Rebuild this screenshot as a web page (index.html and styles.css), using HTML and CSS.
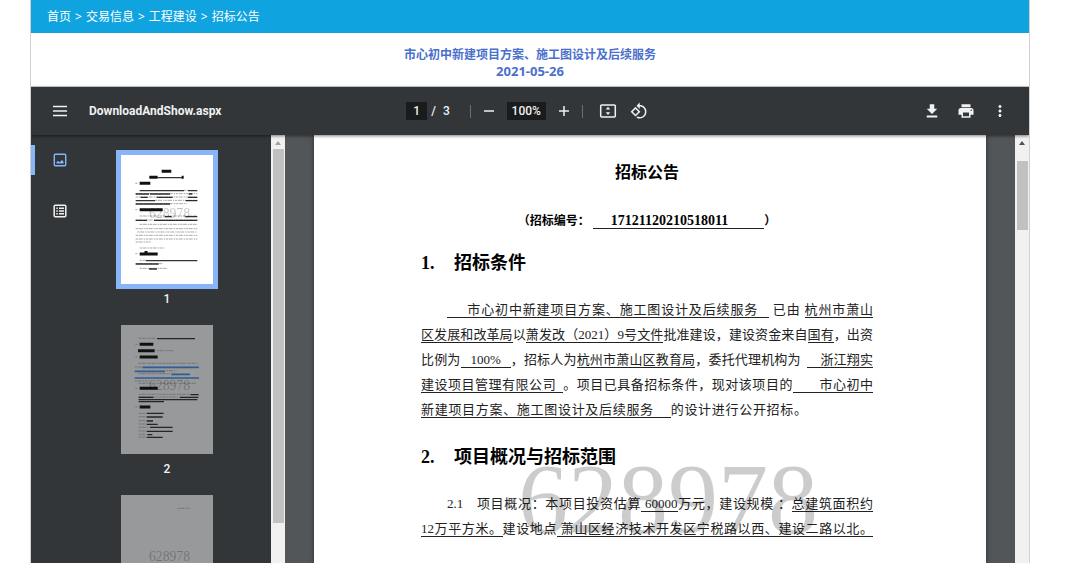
FILE: index.html
```html
<!DOCTYPE html>
<html lang="zh-CN">
<head>
<meta charset="utf-8">
<meta name="viewport" content="width=device-width, initial-scale=1">
<title>招标公告</title>
<link rel="stylesheet" href="styles.css">
</head>
<body>
<div class="shell">
  <nav class="crumbs" aria-label="面包屑">
    <a href="#">首页</a><span>&gt;</span><a href="#">交易信息</a><span>&gt;</span><a href="#">工程建设</a><span>&gt;</span><a href="#">招标公告</a>
  </nav>
  <header class="notice">
    <h1 class="notice-title">市心初中新建项目方案、施工图设计及后续服务</h1>
    <time class="notice-date" datetime="2021-05-26">2021-05-26</time>
  </header>
  <section class="viewer">
    <div class="toolbar">
      <div class="tools-left">
        <button class="tool" type="button" aria-label="菜单">
          <svg width="24" height="24" viewBox="0 0 24 24"><path d="M5 7.500h14M5 12h14M5 16.500h14" stroke="currentColor" stroke-width="1.700"/></svg>
        </button>
        <span class="file-name">DownloadAndShow.aspx</span>
      </div>
      <div class="tools-mid">
        <input class="field page-field" type="text" value="1" aria-label="页码">
        <span class="page-total"><span>/</span><span>3</span></span>
        <span class="divider"></span>
        <button class="tool small" type="button" aria-label="缩小">
          <svg width="14" height="14" viewBox="0 0 14 14"><path d="M2 7h10" stroke="currentColor" stroke-width="1.5"/></svg>
        </button>
        <input class="field zoom-field" type="text" value="100%" aria-label="缩放">
        <button class="tool small" type="button" aria-label="放大">
          <svg width="14" height="14" viewBox="0 0 14 14"><path d="M2 7h10M7 2v10" stroke="currentColor" stroke-width="1.5"/></svg>
        </button>
        <span class="divider"></span>
        <button class="tool fit" type="button" aria-label="适合页面">
          <svg width="18" height="18" viewBox="0 0 18 18"><rect x="1.7" y="2.9" width="14.6" height="12" rx="1" fill="none" stroke="currentColor" stroke-width="1.5"/><path d="M9 4.8l2.2 2.7H6.800zM9 13l2.200-2.700H6.800z" fill="currentColor"/></svg>
        </button>
        <button class="tool rotate" type="button" aria-label="旋转">
          <svg width="18" height="18" viewBox="0 0 24 24"><path fill="currentColor" d="M7.340 6.410L.860 12.900l6.490 6.480 6.490-6.480-6.500-6.490zM3.690 12.900l3.660-3.660L11 12.900l-3.660 3.660-3.650-3.660zm15.670-6.260C17.610 4.880 15.300 4 13 4V.760L8.760 5 13 9.240V6c1.790 0 3.580.680 4.950 2.050 2.730 2.730 2.730 7.170 0 9.900C16.580 19.320 14.790 20 13 20c-.970 0-1.940-.210-2.840-.610l-1.490 1.490C10.020 21.620 11.510 22 13 22c2.300 0 4.610-.880 6.360-2.640 3.520-3.510 3.520-9.210 0-12.720z"/></svg>
        </button>
      </div>
      <div class="tools-right">
        <button class="tool" type="button" aria-label="下载">
          <svg width="18" height="18" viewBox="0 0 24 24"><path fill="currentColor" d="M19 9h-4V3H9v6H5l7 7 7-7zM5 18v2.500h14V18z"/></svg>
        </button>
        <button class="tool" type="button" aria-label="打印">
          <svg width="18" height="18" viewBox="0 0 24 24"><path fill="currentColor" d="M19 8H5c-1.660 0-3 1.340-3 3v6h4v4h12v-4h4v-6c0-1.660-1.340-3-3-3zm-3 11H8v-5h8v5zm3-7c-.550 0-1-.450-1-1s.450-1 1-1 1 .450 1 1-.450 1-1 1zm-1-9H6v4h12V3z"/></svg>
        </button>
        <button class="tool" type="button" aria-label="更多">
          <svg width="18" height="18" viewBox="0 0 24 24"><path fill="currentColor" d="M12 8c1.100 0 2-.900 2-2s-.900-2-2-2-2 .900-2 2 .900 2 2 2zm0 2c-1.100 0-2 .900-2 2s.900 2 2 2 2-.900 2-2-.900-2-2-2zm0 6c-1.100 0-2 .900-2 2s.900 2 2 2 2-.900 2-2-.900-2-2-2z"/></svg>
        </button>
      </div>
    </div>
    <div class="stage">
      <aside class="sidebar">
        <div class="rail">
          <button class="rail-item active" type="button" aria-label="缩略图">
            <svg width="14" height="14" viewBox="0 0 14 14"><rect x="1.300" y="1.300" width="11.400" height="11.400" rx="1" fill="none" stroke="currentColor" stroke-width="1.400"/><path d="M3.500 10.500V9l1.500-1 1.700 1.300L9 7l1.500 1.500v2z" fill="currentColor"/></svg>
          </button>
          <button class="rail-item" type="button" aria-label="大纲">
            <svg width="14" height="14" viewBox="0 0 14 14"><rect x="1.200" y="1.200" width="11.600" height="11.600" rx="1" fill="none" stroke="currentColor" stroke-width="1.500"/><path d="M3.300 4.200h1.500M6 4.200h5M3.300 7h1.500M6 7h5M3.300 9.800h1.500M6 9.800h5" stroke="currentColor" stroke-width="1.600"/></svg>
          </button>
        </div>
        <div class="thumbs">
          <figure class="thumb current">
            <svg class="sheet" viewBox="273 75 276 387" aria-hidden="true">
              <g class="faint"><path d="M462 181h12M317 191h185M317 201h185M375 211h127M317 221h153M329 258h173M317 270h185M329 283h173M317 296h185M322 306h180M317 316h185M317 327h185M317 336h45M329 354h73M329 391h20M317 401h80M329 415h81M316 160h6M316 239h6M316 371h6"/></g>
              <g class="rule"><path d="M383 143h75M329 182h133M474 182h28M317 192h40M360 192h60M476 192h11M332 202h21M380 202h48M474 202h28M317 212h58M467 212h35M317 222h103M405 260h20M466 260h36M317 271h34M372 271h130M348 392h154M317 402h69M357 417h24"/></g>
              <g class="bold"><path d="M395 124h29M358 142h25M455 142h6M329 160h32M329 239h69M329 372h54M348 368v-5"/></g>
              <text class="mark" x="357" y="265">628978</text>
            </svg>
            <figcaption>1</figcaption>
          </figure>
          <figure class="thumb">
            <svg class="sheet" viewBox="273 45 276 387" aria-hidden="true">
              <g class="faint"><path d="M326 85h50M380 122h50M326 160h180M314 171h23M408 182h32M326 191h94M314 213h44M326 220h174M326 253h156M326 261h120M326 310h20M326 320h20M326 332h20M326 342h20M326 352h30M326 363h20M326 373h20M326 381h20M316 103h6M316 141h6M316 235h6M316 291h6"/></g>
              <g class="rule"><path d="M381 86h114M482 254h24M326 262h44M449 262h56M326 269h176M326 275h76M350 310h51M350 321h48M350 333h19M350 343h33M360 352h68M350 364h78M352 374h15M350 382h48"/></g>
              <g class="blue"><path d="M337 172h170M314 184h91M424 193h56M314 204h193"/></g>
              <g class="bold"><path d="M329 103h41M324 122h50M329 141h54M329 235h54M329 291h32"/></g>
              <text class="mark" x="357" y="240">628978</text>
            </svg>
            <figcaption>2</figcaption>
          </figure>
          <figure class="thumb">
            <svg class="sheet" viewBox="273 555 276 387" aria-hidden="true">
              <g class="faint"><path d="M442 595h38"/></g>
              <text class="mark" x="357" y="752">628978</text>
            </svg>
          </figure>
        </div>
        <div class="scroll"><span class="arrow dim"></span><span class="grip long"></span></div>
      </aside>
      <main class="canvas">
        <article class="page">
          <h2 class="doc-title">招标公告</h2>
          <p class="doc-id">（招标编号：&nbsp;<u>&emsp;&ensp;<span class="doc-number">17121120210518011</span>&emsp;&emsp;&emsp;</u>）</p>
          <h3 class="doc-head"><span class="num">1.</span>招标条件</h3>
          <div class="para">
            <p class="line indent"><u>&ensp;&emsp;市心初中新建项目方案、施工图设计及后续服务&ensp;&nbsp;</u>&nbsp;已由&nbsp;<u>杭州市萧山</u></p>
            <p class="line"><u>区发展和改革局</u>以<u>萧发改（2021）9号文件</u>批准建设，建设资金来自<u>国有</u>，出资</p>
            <p class="line">比例为<u>&ensp;&nbsp;100%&ensp;&nbsp;</u>，招标人为<u>杭州市萧山区教育局</u>，委托代理机构为&ensp;<u>&emsp;浙江翔实</u></p>
            <p class="line"><u>建设项目管理有限公司&ensp;</u>。项目已具备招标条件，现对该项目的<u>&emsp;&emsp;市心初中</u></p>
            <p class="line short"><u>新建项目方案、施工图设计及后续服务&emsp;&nbsp;</u>的设计进行公开招标。</p>
          </div>
          <h3 class="doc-head"><span class="num">2.</span>项目概况与招标范围</h3>
          <div class="para">
            <p class="line indent">2.1&emsp;项目概况：本项目投资估算<u>&nbsp;60000</u>万元，建设规模&nbsp;：<u>总建筑面积约</u></p>
            <p class="line"><u>12万平方米。</u>建设地点<u>&nbsp;萧山区经济技术开发区宁税路以西、建设二路以北。</u></p>
            <span class="watermark">628978</span>
          </div>
        </article>
        <div class="scroll"><span class="arrow"></span><span class="grip"></span></div>
      </main>
    </div>
  </section>
</div>
</body>
</html>
```
FILE: styles.css
```css
* { box-sizing: border-box; }
body { margin: 0; background: #fff; }
h1, h2, h3, p, figure { margin: 0; }

.shell {
  height: 100vh;
  margin: 0 50px 0 30px;
  border: solid #d0d0d0;
  border-width: 0 1px;
  display: flex;
  flex-direction: column;
  overflow: hidden;
  font-family: "Noto Sans", "Noto Sans CJK SC", sans-serif;
}

.crumbs {
  display: flex;
  gap: 4px;
  margin: 0 -1px;
  padding: 0 17px;
  background: #0fa4e0;
  color: #fff;
  font-size: 12px;
  line-height: 33px;
}
.crumbs a { color: inherit; text-decoration: none; }

.notice {
  padding: 14px 0 7px;
  text-align: center;
  color: #4a70cc;
  font-weight: bold;
  border-bottom: 1px solid #d0d0d0;
}
.notice-title { font-size: 12px; line-height: 16px; }
.notice-date { display: block; font-size: 13px; line-height: 16px; }

.viewer {
  flex: 1;
  min-height: 0;
  display: flex;
  flex-direction: column;
  background: #525659;
}

.toolbar {
  position: relative;
  z-index: 1;
  display: grid;
  grid-template-columns: 1fr auto 1fr;
  align-items: center;
  height: 48px;
  padding: 0 12px;
  background: #323639;
  color: #f1f1f1;
  font-family: Roboto, sans-serif;
  font-size: 12px;
  font-weight: 500;
  box-shadow: 0 1px 3px rgba(0, 0, 0, .5);
}
.tools-left, .tools-mid, .tools-right { display: flex; align-items: center; }
.tools-mid { padding-right: 5px; }
.tools-right { justify-content: flex-end; }
.tool {
  width: 34px;
  height: 34px;
  padding: 0;
  border: 0;
  background: none;
  color: inherit;
  display: flex;
  align-items: center;
  justify-content: center;
}
.small { width: 36px; }
.fit { width: 42px; margin-left: 4px; }
.rotate { width: 20px; }
.file-name { margin-left: 12px; font-weight: bold; }
.field {
  height: 18px;
  padding: 0;
  border: 0;
  background: #191b1c;
  color: inherit;
  font: inherit;
  text-align: center;
}
.page-field { width: 21px; }
.zoom-field { width: 39px; }
.page-total { display: flex; gap: 7px; margin: 0 20px 0 4px; }
.divider { width: 1px; height: 13px; background: #6a6e70; }

.stage { flex: 1; min-height: 0; display: flex; }

.sidebar { display: flex; flex: none; background: #323639; }
.rail {
  width: 58px;
  padding-top: 10px;
  display: flex;
  flex-direction: column;
  gap: 21px;
}
.rail-item {
  height: 30px;
  padding: 0 4px 0 0;
  border: 0;
  border-left: 4px solid transparent;
  border-radius: 0 2px 2px 0;
  background: none;
  color: #f1f1f1;
  display: flex;
  align-items: center;
  justify-content: center;
}
.rail-item.active { border-left-color: #8ab4f8; color: #8ab4f8; }

.thumbs {
  width: 182px;
  padding: 20px 0 0 32px;
  color: #f1f1f1;
  font: 500 12px/20px Roboto, sans-serif;
}
.thumb { width: 92px; height: 170px; text-align: center; }
.sheet { display: block; width: 92px; height: 129px; background: #fff; }
.thumb:not(.current) .sheet { background: #98999b; }
.current .sheet { outline: 5px solid #8ab4f8; }
.thumb figcaption { padding-top: 5px; }
.sheet path { fill: none; }
.faint { stroke: #555; stroke-width: 3; stroke-dasharray: 7 2 12 3 4 2; opacity: .5; }
.rule { stroke: #111; stroke-width: 4; opacity: .85; }
.bold { stroke: #111; stroke-width: 9; }
.blue { stroke: #2d5f96; stroke-width: 5; }
.mark { font: 41px "Liberation Serif", serif; fill: #000; fill-opacity: .25; }

.scroll {
  width: 14px;
  flex: none;
  display: flex;
  flex-direction: column;
  align-items: center;
  background: #f1f1f1;
}
.arrow {
  margin: 6px 0 16px;
  border: solid transparent;
  border-width: 0 3px 4px;
  border-bottom-color: #505050;
}
.arrow.dim { margin-bottom: 4px; border-bottom-color: #a0a0a0; }
.grip { width: 11px; height: 69px; background: #c1c1c1; }
.grip.long { height: 374px; }

.canvas { flex: 1; min-width: 0; display: flex; }
.page {
  flex: 1;
  min-width: 0;
  margin: 0 29px;
  padding: 26px 113px 0 107px;
  background: #fff;
  color: #000;
  box-shadow: 0 0 4px rgba(0, 0, 0, .5);
  font-family: "Liberation Serif", "Noto Sans CJK SC", serif;
  overflow: hidden;
}
.page u { text-decoration: none; border-bottom: 1px solid #222; }
.doc-title { font-size: 16px; line-height: 24px; text-align: center; }
.doc-id {
  margin: 24px 0 18px;
  font-size: 12px;
  line-height: 24px;
  font-weight: bold;
  text-align: center;
  white-space: nowrap;
}
.doc-number { font-size: 14px; }
.doc-head { display: flex; font-size: 18px; line-height: 24px; }
.doc-head .num { width: 33px; }
.para { position: relative; margin: 22px 0 23px; color: #222; }
.line {
  font-size: 13px;
  line-height: 25px;
  height: 25px;
  white-space: nowrap;
  text-align: justify;
  text-align-last: justify;
}
.indent { padding-left: 26px; }
.short { padding-right: 66px; }
.watermark {
  position: absolute;
  left: 97px;
  bottom: -8px;
  font-size: 100px;
  line-height: 100px;
  color: rgba(0, 0, 0, .2);
}
```
